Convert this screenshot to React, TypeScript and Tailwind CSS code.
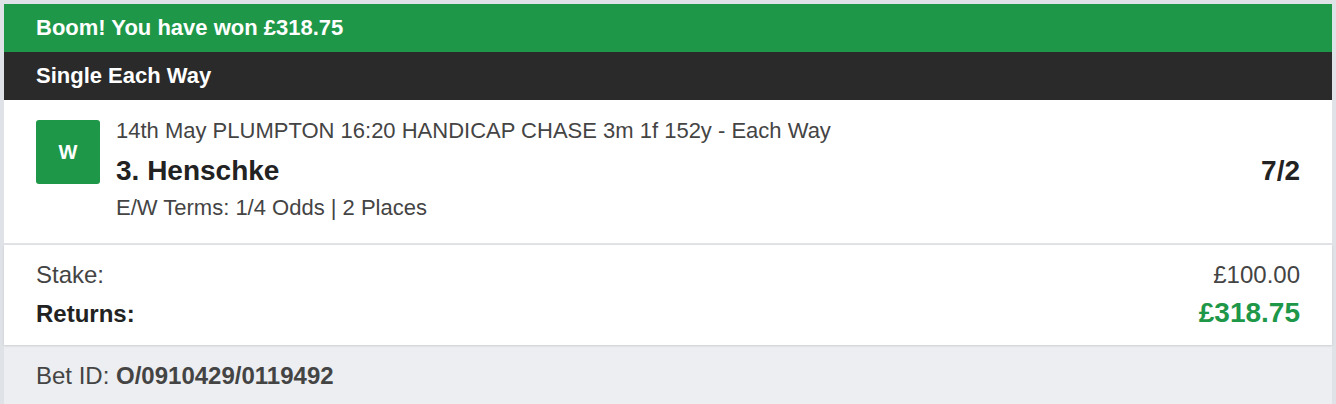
import React from "react";

export default function App() {
  return (
    <div
      className="min-h-screen bg-[#dfe2e6] p-1"
      style={{ fontFamily: '"Liberation Sans", Arial, sans-serif' }}
    >
      <div className="bg-white">
        <div className="flex h-12 items-center bg-[#1e9749] px-8 text-[22px] font-bold leading-[22px] text-white">
          Boom! You have won £318.75
        </div>
        <div className="flex h-12 items-center bg-[#2a2a2a] px-8 text-[22px] font-bold leading-[22px] text-white">
          Single Each Way
        </div>

        <div className="flex gap-4 border-b-2 border-[#e1e3e6] px-8 pb-[24px] pt-5">
          <div className="flex h-16 w-16 shrink-0 items-center justify-center rounded-[3px] bg-[#1e9749] text-[20px] font-bold text-white">
            W
          </div>
          <div className="flex flex-1 flex-col">
            <div className="text-[22px] leading-[22px] text-[#444444]">
              14th May PLUMPTON 16:20 HANDICAP CHASE 3m 1f 152y - Each Way
            </div>
            <div className="mt-[15px] flex items-center justify-between text-[28px] font-bold leading-[28px] text-[#222222]">
              <span>3. Henschke</span>
              <span>7/2</span>
            </div>
            <div className="mt-3 text-[22px] leading-[22px] text-[#444444]">
              E/W Terms: 1/4 Odds | 2 Places
            </div>
          </div>
        </div>

        <div className="relative z-10 px-8 pb-[18px] pt-[18px] shadow-[0_1px_2px_rgba(0,0,0,0.14)]">
          <div className="flex h-6 items-baseline justify-between text-[24px] leading-[24px] text-[#444444]">
            <span>Stake:</span>
            <span>£100.00</span>
          </div>
          <div className="mt-3 flex h-7 items-baseline justify-between">
            <span className="text-[24px] font-bold leading-[24px] text-[#222222]">Returns:</span>
            <span className="text-[28px] font-bold leading-[28px] text-[#1e9749]">£318.75</span>
          </div>
        </div>

        <div className="bg-[#eceef1] px-8 pb-4 pt-[19px] text-[24px] leading-[24px] text-[#444444]">
          Bet ID: <span className="font-bold">O/0910429/0119492</span>
        </div>
      </div>
    </div>
  );
}
